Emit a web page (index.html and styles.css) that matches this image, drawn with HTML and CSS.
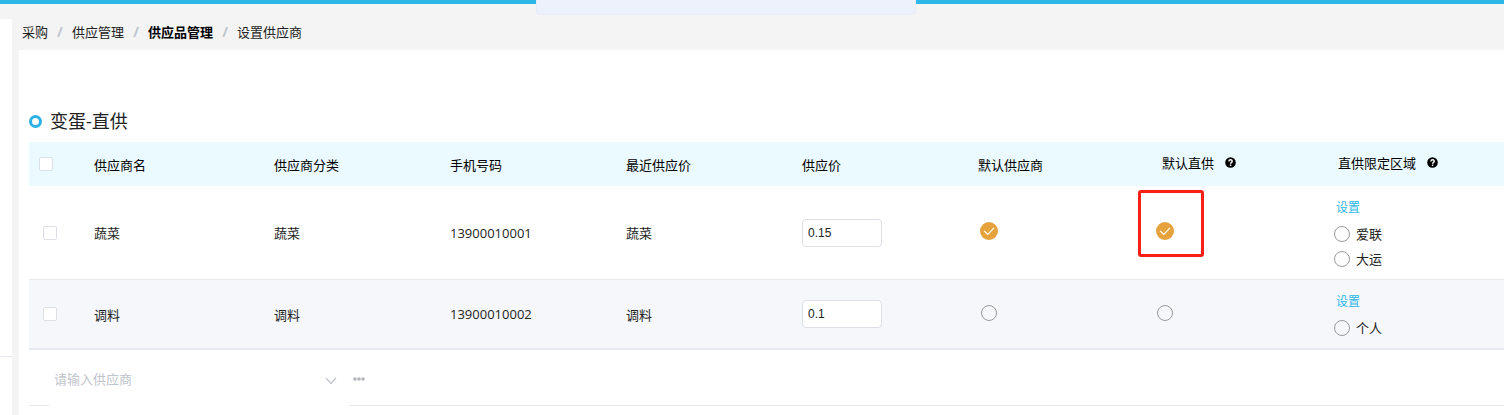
FILE: index.html
```
<!DOCTYPE html>
<html lang="zh-CN">
<head>
    <meta charset="UTF-8">
    <meta name="viewport" content="width=device-width, initial-scale=1.0">
    <title>设置供应商</title>

    <link rel="stylesheet" href="styles.css">
</head>
<body>

    <div class="topbar"></div>
    <div class="notice"></div>

    <div class="layout">
        <!-- 侧边栏 -->
        <aside class="sidebar">
            <div class="sidebar-group"></div>
        </aside>

        <main class="main">
            <!-- 面包屑 -->
            <nav class="breadcrumb">
                <a href="#">采购</a><span class="sep">/</span>
                <a href="#">供应管理</a><span class="sep">/</span>
                <a href="#" class="strong">供应品管理</a><span class="sep">/</span>
                <span>设置供应商</span>
            </nav>

            <section class="panel">
                <h1 class="title"><span class="ring"></span>变蛋-直供</h1>

                <table class="suppliers">
                    <colgroup>
                        <col class="col-check">
                        <col class="col-name">
                        <col class="col">
                        <col class="col">
                        <col class="col">
                        <col class="col">
                        <col class="col">
                        <col class="col">
                        <col>
                    </colgroup>
                    <thead>
                        <tr>
                            <th><input type="checkbox" class="checkbox" aria-label="全选"></th>
                            <th>供应商名</th>
                            <th>供应商分类</th>
                            <th>手机号码</th>
                            <th>最近供应价</th>
                            <th>供应价</th>
                            <th>默认供应商</th>
                            <th class="with-help">
                                <span class="help-label">默认直供
                                    <svg class="help" viewBox="0 0 11 11"><circle cx="5.5" cy="5.5" r="5.3"/><path d="M3.9 4.4C3.9 2.2 7.2 2.3 7.2 4.2C7.2 5.4 5.6 5.4 5.6 6.7M5.6 7.6V8.9"/></svg>
                                </span>
                            </th>
                            <th class="with-help">
                                <span class="help-label">直供限定区域
                                    <svg class="help" viewBox="0 0 11 11"><circle cx="5.5" cy="5.5" r="5.3"/><path d="M3.9 4.4C3.9 2.2 7.2 2.3 7.2 4.2C7.2 5.4 5.6 5.4 5.6 6.7M5.6 7.6V8.9"/></svg>
                                </span>
                            </th>
                        </tr>
                    </thead>
                    <tbody>
                        <tr>
                            <td class="cell-check"><input type="checkbox" class="checkbox" aria-label="选择蔬菜"></td>
                            <td>蔬菜</td>
                            <td>蔬菜</td>
                            <td>13900010001</td>
                            <td>蔬菜</td>
                            <td><input type="text" class="price" value="0.15" aria-label="供应价"></td>
                            <td class="cell-pick">
                                <label class="pick">
                                    <input type="radio" name="default" aria-label="默认供应商" checked>
                                    <svg viewBox="0 0 18 18"><path d="M4.2 9L7.8 12.4L14 5.8"/></svg>
                                </label>
                            </td>
                            <td class="cell-pick marked">
                                <label class="pick">
                                    <input type="radio" name="direct" aria-label="默认直供" checked>
                                    <svg viewBox="0 0 18 18"><path d="M4.2 9L7.8 12.4L14 5.8"/></svg>
                                </label>
                                <span class="mark"></span>
                            </td>
                            <td class="cell-area">
                                <a href="#" class="set">设置</a>
                                <label class="area"><input type="radio" name="area1" class="radio">爱联</label>
                                <label class="area"><input type="radio" name="area1" class="radio">大运</label>
                            </td>
                        </tr>
                        <tr>
                            <td class="cell-check"><input type="checkbox" class="checkbox" aria-label="选择调料"></td>
                            <td>调料</td>
                            <td>调料</td>
                            <td>13900010002</td>
                            <td>调料</td>
                            <td><input type="text" class="price" value="0.1" aria-label="供应价"></td>
                            <td class="cell-pick"><label class="pick"><input type="radio" name="default" class="radio" aria-label="默认供应商"></label></td>
                            <td class="cell-pick"><label class="pick"><input type="radio" name="direct" class="radio" aria-label="默认直供"></label></td>
                            <td class="cell-area">
                                <a href="#" class="set">设置</a>
                                <label class="area"><input type="radio" name="area2" class="radio">个人</label>
                            </td>
                        </tr>
                    </tbody>
                </table>

                <!-- 新增供应商 -->
                <div class="add-row">
                    <div class="select-box">
                        <select aria-label="供应商">
                            <option>请输入供应商</option>
                        </select>
                        <svg class="arrow" viewBox="0 0 12 8"><path d="M1 1L6 6.5L11 1"/></svg>
                    </div>
                    <button type="button" class="more" aria-label="更多">
                        <svg viewBox="0 0 12 4"><circle cx="2" cy="2" r="1.8"/><circle cx="6" cy="2" r="1.8"/><circle cx="10" cy="2" r="1.8"/></svg>
                    </button>
                </div>
            </section>
        </main>
    </div>

</body>
</html>
```
FILE: styles.css
```
* {
    box-sizing: border-box;
}

body {
    font-family: 'Open Sans', 'Noto Sans CJK SC', sans-serif;
    font-size: 13px;
    color: #222;
    margin: 0;
    min-height: 100vh;
    display: flex;
    flex-direction: column;
    background: #f4f4f4;
}

a {
    color: inherit;
    text-decoration: none;
}

input {
    margin: 0;
}

.topbar {
    height: 4px;
    background: #2cb7e8;
}

.notice {
    position: absolute;
    top: 0;
    left: 536px;
    width: 380px;
    height: 15px;
    background: #ecf1fc;
    border: 1px solid #e9edf8;
    border-top: none;
    border-radius: 0 0 4px 4px;
}

.layout {
    flex: 1;
    display: flex;
    gap: 7px;
}

.sidebar {
    width: 12px;
    margin-top: 15px;
    background: white;
}

.sidebar-group {
    height: 338px;
    border-bottom: 1px solid #e4e7ed;
}

.main {
    flex: 1;
    min-width: 0;
    display: flex;
    flex-direction: column;
}

.breadcrumb {
    display: flex;
    align-items: center;
    height: 46px;
    padding: 10px 3px 0;
    line-height: 20px;
}

.breadcrumb .strong {
    font-weight: bold;
    color: #000;
}

.sep {
    width: 24px;
    text-align: center;
    font-size: 14px;
    font-weight: bold;
    color: #c0c4cc;
}

.panel {
    flex: 1;
    padding: 57px 0 0 10px;
    background: white;
}

.title {
    display: flex;
    align-items: center;
    gap: 8px;
    margin: 0 0 7px;
    font-size: 18px;
    line-height: 28px;
    font-weight: normal;
}

.ring {
    width: 13px;
    height: 13px;
    border: 3px solid #2cb0e6;
    border-radius: 50%;
}

.suppliers {
    width: 100%;
    table-layout: fixed;
    border-collapse: separate;
    border-spacing: 0;
    border-bottom: 1px solid #e4e7ed;
}

.col-check { width: 55px; }
.col-name { width: 180px; }
.col { width: 176px; }

.suppliers th {
    height: 44px;
    padding: 0 10px;
    background: #ebfaff;
    color: #000;
    font-weight: normal;
    text-align: left;
}

.suppliers .with-help {
    padding: 0 0 3px 18px;
}

.help-label {
    display: flex;
    align-items: center;
    gap: 11px;
}

.help {
    width: 11px;
    height: 11px;
}

.help path {
    fill: none;
    stroke: white;
    stroke-width: 1.4;
}

.suppliers td {
    padding: 0 10px;
    border-bottom: 1px solid #e6e9f1;
}

.suppliers tbody tr:nth-child(even) {
    background: #f5f7fb;
}

.suppliers .cell-check {
    padding-left: 14px;
}

.checkbox {
    appearance: none;
    display: block;
    width: 14px;
    height: 14px;
    border: 1px solid #dcdfe6;
    border-radius: 2px;
    background: white;
}

.price {
    display: block;
    width: 80px;
    height: 28px;
    padding: 0 5px;
    border: 1px solid #dcdfe6;
    border-radius: 4px;
    background: white;
    color: #222;
    font: 12px 'Liberation Sans', Arial, sans-serif;
}

.suppliers .cell-pick {
    padding: 0 0 3px 12px;
}

.pick {
    display: flex;
    align-items: center;
    justify-content: center;
    width: 18px;
    height: 18px;
}

.pick svg {
    width: 18px;
    height: 18px;
    border-radius: 50%;
    background: #e6a23c;
}

.pick svg path {
    fill: none;
    stroke: white;
    stroke-width: 1.2;
}

.pick input:checked {
    appearance: none;
    width: 0;
    height: 0;
}

.radio {
    appearance: none;
    width: 16px;
    height: 16px;
    border: 1px solid #999;
    border-radius: 50%;
}

.marked {
    position: relative;
}

.mark {
    position: absolute;
    top: 4px;
    left: -6px;
    width: 66px;
    height: 67px;
    border: 3px solid #fb2015;
    border-radius: 3px;
}

.suppliers .cell-area {
    padding: 9px 14px 8px;
}

.set {
    display: block;
    margin-bottom: 1px;
    padding-left: 2px;
    font-size: 12px;
    line-height: 25px;
    color: #2cb7e8;
}

.area {
    display: flex;
    align-items: center;
    gap: 6px;
    height: 25px;
}

.add-row {
    display: flex;
    align-items: center;
    height: 56px;
    padding-left: 20px;
    border-bottom: 1px solid #e6e8ec;
}

.select-box {
    position: relative;
    flex: 0 0 300px;
    margin-bottom: -1px;
}

.select-box select {
    appearance: none;
    display: block;
    width: 100%;
    height: 56px;
    padding: 2px 30px 0 5px;
    border: none;
    background: white;
    color: #c0c4cc;
    font: inherit;
}

.arrow {
    position: absolute;
    top: 27px;
    right: 12px;
    width: 12px;
    height: 8px;
    fill: none;
    stroke: #c0c4cc;
    stroke-width: 1.2;
}

.more {
    display: flex;
    padding: 5px 4px 3px;
    border: none;
    background: none;
    cursor: pointer;
}

.more svg {
    width: 12px;
    height: 4px;
    fill: #b4b6bd;
}
```
